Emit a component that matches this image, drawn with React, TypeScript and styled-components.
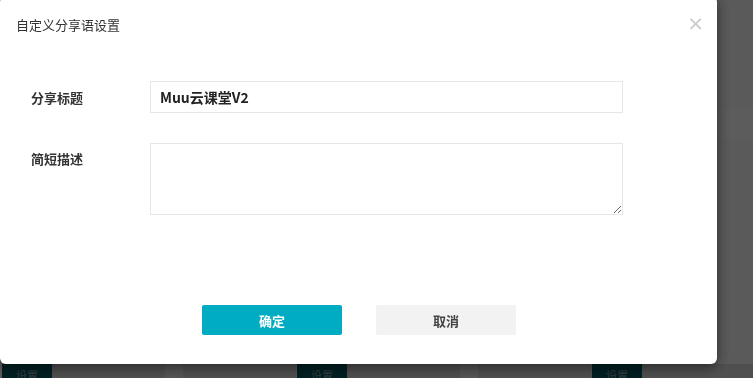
import styled, { createGlobalStyle } from 'styled-components';

const GlobalStyle = createGlobalStyle`
  html, body { margin: 0; padding: 0; }
  body {
    width: 753px;
    height: 378px;
    overflow: hidden;
    font-family: "Noto Sans CJK SC", "Liberation Sans", sans-serif;
    background: #fafafa;
  }
`;

/* ---------- page behind the dialog ---------- */
const Page = styled.div`
  width: 753px;
  height: 378px;
  display: flex;
  flex-direction: column;
  background: #fafafa;
`;

const Band = styled.div`
  height: 32px;
  margin-top: 108px;
  background: #ffffff;
`;

const Spacer = styled.div`
  flex: 1;
`;

const CardRow = styled.div`
  display: flex;
  padding-left: 2px;
  height: 14px;
`;

const Card = styled.div`
  width: 295px;
  display: flex;
  flex-shrink: 0;
`;

const SetButton = styled.div`
  width: 50px;
  background: #005862;
  color: #9aa;
  font-size: 11px;
  text-align: center;
  line-height: 22px;
`;

const CardBody = styled.div`
  flex: 1;
  display: flex;
  gap: 18px;
  background: #ededed;
`;

const CardCell = styled.div`
  width: 113px;
  background: #dcdcdc;
`;

/* ---------- overlay & dialog ---------- */
const Overlay = styled.div`
  position: fixed;
  inset: 0;
  background: rgba(0, 0, 0, 0.64);
`;

const Dialog = styled.div`
  position: absolute;
  left: 0;
  top: -4px;
  width: 717px;
  height: 368px;
  background: #fff;
  border-radius: 6px;
  box-shadow: 0 3px 14px rgba(0, 0, 0, 0.55);
  display: flex;
  flex-direction: column;
`;

const Header = styled.div`
  display: flex;
  align-items: center;
  justify-content: space-between;
  padding: 17px 13px 0 16px;
  height: 22px;
`;

const Title = styled.h4`
  margin: 0;
  font-size: 13px;
  font-weight: 400;
  color: #333;
`;

const Close = styled.span`
  color: #c8c8c8;
  font-size: 20px;
  font-family: "DejaVu Sans", sans-serif;
  line-height: 1;
  margin-top: -2px;
`;

const Form = styled.div`
  display: flex;
  flex-direction: column;
  gap: 30px;
  padding: 46px 0 0 0;
`;

const Row = styled.div`
  display: grid;
  grid-template-columns: 150px 473px;
  align-items: start;
`;

const Label = styled.label<{ $top: number }>`
  padding-left: 31px;
  padding-top: ${p => p.$top}px;
  font-size: 13px;
  font-weight: 700;
  color: #333;
`;

const TextInput = styled.input`
  box-sizing: border-box;
  width: 473px;
  height: 32px;
  border: 1px solid #e6e6e6;
  padding: 0 9px;
  font-family: inherit;
  font-size: 14px;
  font-weight: 700;
  color: #222;
  outline: none;
`;

const TextArea = styled.textarea`
  box-sizing: border-box;
  width: 473px;
  height: 72px;
  border: 1px solid #e6e6e6;
  padding: 6px 9px;
  font-family: inherit;
  font-size: 13px;
  outline: none;
  display: block;
`;

const Footer = styled.div`
  display: flex;
  gap: 34px;
  padding-left: 202px;
  margin-top: 90px;
`;

const Button = styled.button<{ $primary?: boolean }>`
  width: 140px;
  height: 30px;
  border: none;
  border-radius: 2px;
  font-family: inherit;
  font-size: 13px;
  font-weight: 700;
  cursor: pointer;
  background: ${p => (p.$primary ? '#00acc1' : '#f2f2f2')};
  color: ${p => (p.$primary ? '#fff' : '#444')};
`;

export default function App() {
  return (
    <>
      <GlobalStyle />
      <Page>
        <Band />
        <Spacer />
        <CardRow>
          {[0, 1, 2].map(i => (
            <Card key={i}>
              <SetButton>设置</SetButton>
              <CardBody>
                <CardCell />
                <CardCell />
              </CardBody>
            </Card>
          ))}
        </CardRow>
      </Page>

      <Overlay>
        <Dialog>
          <Header>
            <Title>自定义分享语设置</Title>
            <Close>×</Close>
          </Header>

          <Form>
            <Row>
              <Label $top={7}>分享标题</Label>
              <TextInput defaultValue="Muu云课堂V2" />
            </Row>
            <Row>
              <Label $top={6}>简短描述</Label>
              <TextArea />
            </Row>
          </Form>

          <Footer>
            <Button $primary>确定</Button>
            <Button>取消</Button>
          </Footer>
        </Dialog>
      </Overlay>
    </>
  );
}
